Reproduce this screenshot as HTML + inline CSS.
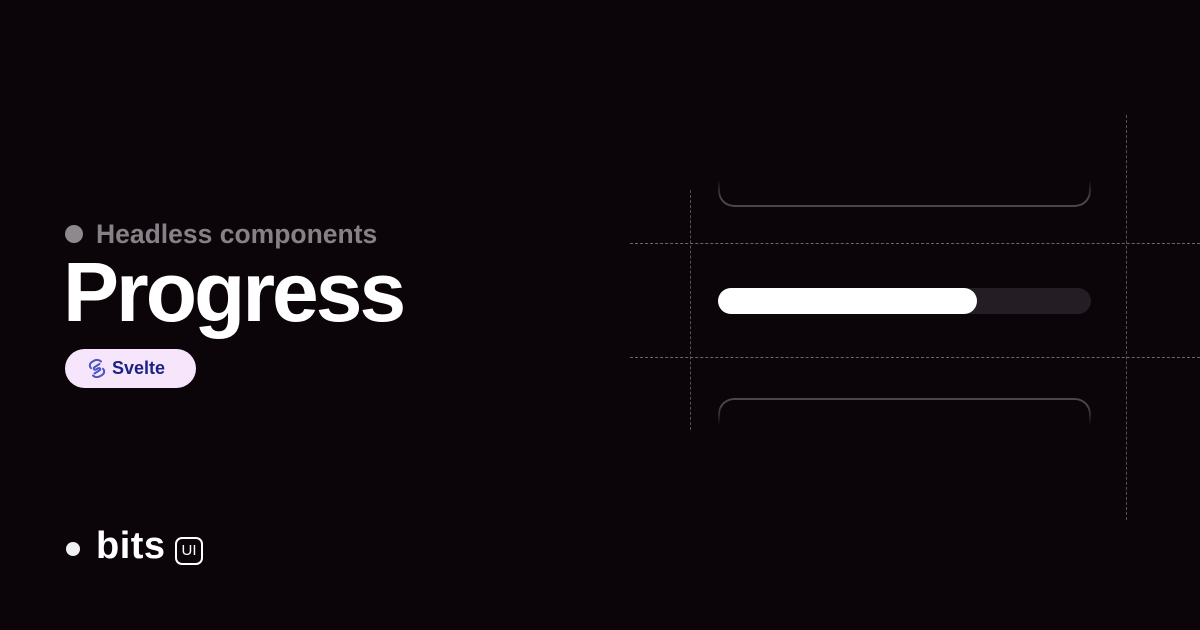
<!DOCTYPE html>
<html><head><meta charset="utf-8"><style>
*{margin:0;padding:0;box-sizing:border-box}
body{width:1200px;height:630px;background:#0b0509;position:relative;overflow:hidden;font-family:"Liberation Sans",sans-serif}
.a{position:absolute}
.vl{border-left:1px dashed #555057}
.hl{border-top:1px dashed #6a656b}
</style></head><body>
<div class="a vl" style="left:690px;top:190px;height:240px"></div>
<div class="a vl" style="left:1126px;top:115px;height:405px"></div>
<div class="a hl" style="left:630px;top:243px;width:570px"></div>
<div class="a hl" style="left:630px;top:357px;width:570px"></div>
<div class="a" style="left:718px;top:180px;width:373px;height:27px;border:2px solid #4a464b;border-top:none;border-radius:0 0 16px 16px;-webkit-mask-image:linear-gradient(transparent,#000 70%);mask-image:linear-gradient(transparent,#000 70%)"></div>
<div class="a" style="left:718px;top:398px;width:373px;height:27px;border:2px solid #4a464b;border-bottom:none;border-radius:16px 16px 0 0;-webkit-mask-image:linear-gradient(#000 30%,transparent);mask-image:linear-gradient(#000 30%,transparent)"></div>
<div class="a" style="left:718px;top:288px;width:373px;height:26px;background:#241d23;border-radius:13px"></div>
<div class="a" style="left:718px;top:288px;width:259px;height:26px;background:#fff;border-radius:13px"></div>

<div class="a" style="left:65px;top:225px;width:18px;height:18px;border-radius:50%;background:#8d898d"></div>
<div class="a" style="left:96px;top:219px;font-size:26.5px;color:#858186;font-weight:bold;letter-spacing:0">Headless components</div>
<div class="a" style="left:63px;top:250px;font-size:84px;color:#fff;font-weight:bold;letter-spacing:-3px;line-height:1">Progress</div>
<div class="a" style="left:65px;top:349px;width:131px;height:39px;border-radius:20px;background:#f7e6fb"></div>
<svg class="a" style="left:88px;top:358px" width="18" height="21" viewBox="0 0 18 21"><path d="M13 3.5C11 1.5 8 1.5 5.5 3L3.5 4.3C1.5 5.7 1.3 8.5 3 10.2M5 17.5C7 19.5 10 19.5 12.5 18L14.5 16.7C16.5 15.3 16.7 12.5 15 10.8M11.5 6L6.5 9.2C5 10.2 6 12.3 7.8 11.5L10.2 10.3C12 9.5 13 11.3 11.5 12.3L6.5 15.5" fill="none" stroke="#4a56c8" stroke-width="2" stroke-linecap="round"/></svg>
<div class="a" style="left:112px;top:358px;font-size:18px;color:#1b2385;font-weight:bold">Svelte</div>

<div class="a" style="left:66px;top:542px;width:14px;height:14px;border-radius:50%;background:#eef0f2"></div>
<div class="a" style="left:96px;top:527px;font-size:38px;color:#fff;font-weight:bold;letter-spacing:0.5px;line-height:1">bits</div>
<div class="a" style="left:175px;top:537px;width:28px;height:28px;border:2px solid #fff;border-radius:7px;color:#fff;font-size:15px;text-align:center;line-height:24px">UI</div>
</body></html>
